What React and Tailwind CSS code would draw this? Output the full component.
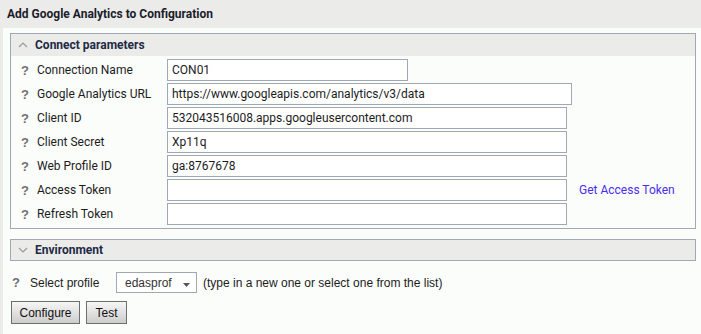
import React from 'react';

const fields = [
    { label: 'Connection Name', value: 'CON01', width: 'w-[241px]' },
    { label: 'Google Analytics URL', value: 'https://www.googleapis.com/analytics/v3/data', width: 'w-[405px]' },
    { label: 'Client ID', value: '532043516008.apps.googleusercontent.com', width: 'w-[400px]' },
    { label: 'Client Secret', value: 'Xp11q', width: 'w-[400px]' },
    { label: 'Web Profile ID', value: 'ga:8767678', width: 'w-[400px]' },
    { label: 'Access Token', value: '', width: 'w-[400px]', link: 'Get Access Token' },
    { label: 'Refresh Token', value: '', width: 'w-[400px]' },
];

const Chevron = ({ up }) => (
    <svg width="10" height="6" viewBox="0 0 10 6" className="shrink-0">
        <polyline
            points={up ? '1,5 5,1 9,5' : '1,1 5,5 9,1'}
            fill="none"
            stroke="#9a9a9a"
            strokeWidth="1.2"
        />
    </svg>
);

const Help = () => (
    <span className="font-['Liberation_Sans',Arial,sans-serif] font-bold text-[13px] text-[#707070] leading-none">?</span>
);

const App = () => {
    return (
        <div className="w-[701px] h-[334px] bg-[#ebecea] font-['Roboto',sans-serif] text-[12px] text-[#1c1c1c] overflow-hidden">
            <div className="h-[28px] flex items-center pl-[7px] font-bold text-[12px] text-[#1b1d2b]">
                Add Google Analytics to Configuration
            </div>

            <div className="ml-[3px] h-[306px] bg-[#fbfdfb] pt-[5px] pl-[7px]">
                {/* Connect parameters */}
                <div className="w-[686px] border border-[#a0a7b5] pb-[2px]">
                    <div className="h-[22px] bg-[#ebecea] flex items-center pl-[7px] gap-[7px] font-bold text-[#1f2a44]">
                        <Chevron up />
                        <span>Connect parameters</span>
                    </div>
                    <div className="pt-[2px]">
                        {fields.map((f) => (
                            <div key={f.label} className="h-[24px] flex items-center">
                                <div className="w-[156px] flex items-center pl-[10px]">
                                    <Help />
                                    <span className="ml-[8px]">{f.label}</span>
                                </div>
                                <input
                                    readOnly
                                    value={f.value}
                                    className={`${f.width} h-[22px] border border-[#a0a7b5] bg-white px-[4px] text-[12px] text-[#1c1c1c] outline-none font-['Roboto',sans-serif]`}
                                />
                                {f.link && (
                                    <a className="ml-[12px] text-[#4a2cec] cursor-pointer">{f.link}</a>
                                )}
                            </div>
                        ))}
                    </div>
                </div>

                {/* Environment */}
                <div className="mt-[10px] w-[686px] h-[22px] border border-[#a0a7b5] bg-[#ebecea] flex items-center pl-[7px] gap-[7px] font-bold text-[#1f2a44]">
                    <Chevron />
                    <span>Environment</span>
                </div>

                <div className="mt-[11px] h-[21px] flex items-center pl-[2px] font-['Liberation_Sans',Arial,sans-serif] text-[12px]">
                    <Help />
                    <span className="ml-[10px] w-[86px]">Select profile</span>
                    <div className="w-[81px] h-[21px] border border-[#a0a7b5] bg-white flex items-center pl-[8px] pr-[6px] justify-between">
                        <span className="text-[#333]">edasprof</span>
                        <svg width="7" height="4" viewBox="0 0 7 4" className="mt-[5px]">
                            <polygon points="0,0 7,0 3.5,4" fill="#555" />
                        </svg>
                    </div>
                    <span className="ml-[6px]">(type in a new one or select one from the list)</span>
                </div>

                <div className="mt-[8px] flex gap-[6px] pl-[1px] font-['Liberation_Sans',Arial,sans-serif] text-[12px]">
                    <button className="h-[23px] w-[69px] border border-[#6e6e6e] bg-gradient-to-b from-[#f6f6f6] to-[#cdcdcd] text-[#111]">
                        Configure
                    </button>
                    <button className="h-[23px] w-[41px] border border-[#6e6e6e] bg-gradient-to-b from-[#f6f6f6] to-[#cdcdcd] text-[#111]">
                        Test
                    </button>
                </div>
            </div>
        </div>
    );
};

export default App;
